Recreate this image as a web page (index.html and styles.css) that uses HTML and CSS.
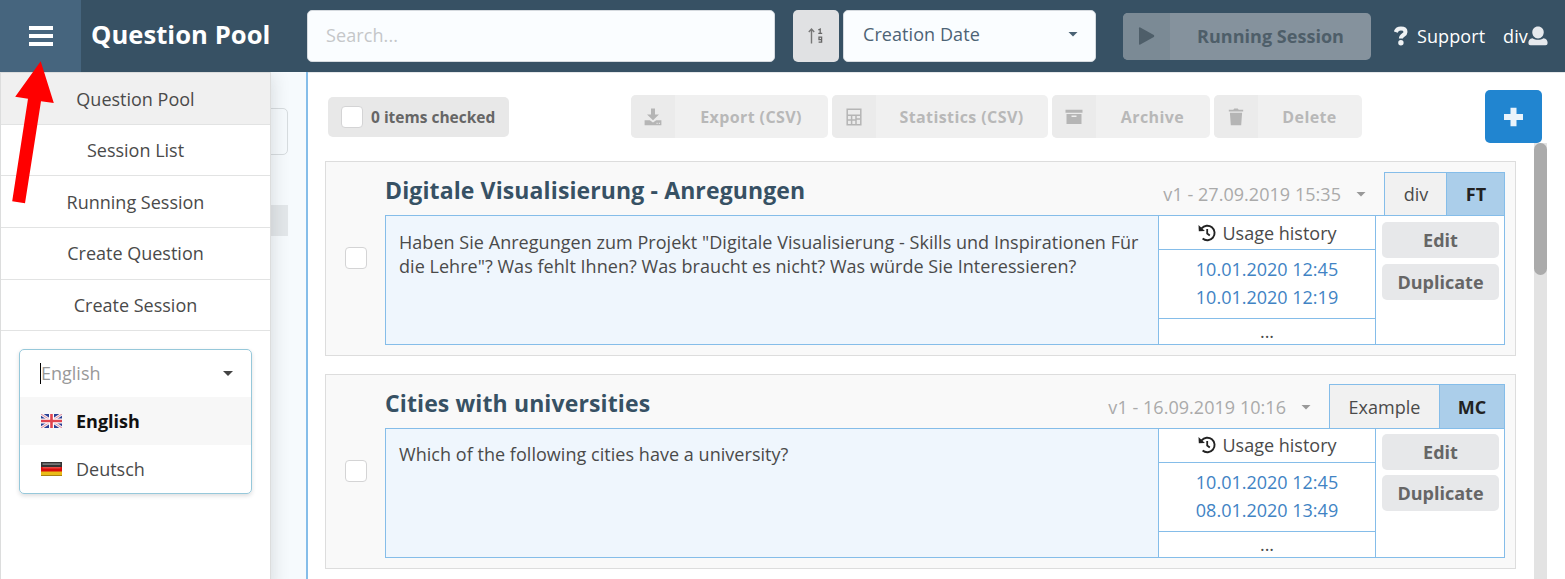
FILE: index.html
```html
<!DOCTYPE html>
<html lang="en">
<head>
<meta charset="utf-8">
<title>Question Pool</title>
<link rel="stylesheet" href="styles.css">
</head>
<body>
<div class="app">
  <header class="topbar">
    <button class="burger" aria-label="Menu"><span></span><span></span><span></span></button>
    <h1 class="page-title"><span>Question Pool</span></h1>
    <div class="search"><span class="t-search">Search...</span></div>
    <button class="sort-dir" aria-label="Sort direction">
      <svg width="16" height="18" viewBox="0 0 16 18"><path d="M3.500 16.500V2.500M.8 5l2.700-3 2.700 3" fill="none" stroke="#777" stroke-width="1.400"/><path d="M10.300 3l1.900-1v4.500M10.300 6.300h3.900" fill="none" stroke="#666" stroke-width="1.300"/><path d="M13.600 12.600h-2.600v-2.500h2.600v5h-3" fill="none" stroke="#666" stroke-width="1.300"/></svg>
    </button>
    <div class="sort-field"><span class="t-sort">Creation Date</span><i class="caret"></i></div>
    <button class="running"><span class="running-icon"><svg width="18" height="20" viewBox="0 0 18 20"><path d="M1 2.200v15.600q0 1.400 1.300.8l13.500-7.700q1.200-.9 0-1.800L2.300 1.400Q1 .8 1 2.200z" fill="#4e5e69"/></svg></span><span class="running-label"><span class="t-running">Running Session</span></span></button>
    <a class="support"><svg width="14" height="20" viewBox="0 0 14 20"><path d="M1.800 6C2.700 3.400 4.400 2.600 6.900 2.600c2.800 0 4.600 1.300 4.600 3.400 0 3.300-4.600 2.800-4.600 6.600" fill="none" stroke="#eff2f4" stroke-width="4"/><circle cx="6.900" cy="16.800" r="2.700" fill="#eff2f4"/></svg><span class="t-support">Support</span></a>
    <a class="user"><span class="t-user">div</span><svg width="20" height="20" viewBox="0 0 20 20"><path d="M10 .5c3.500 0 5.700 2.500 5.700 5.800S13.500 12.500 10 12.500 4.300 9.600 4.300 6.300 6.500.5 10 .5z" fill="#e6e9ed"/><path d="M4.500 12.200c3.300 2.100 7.700 2.100 11 0 2.800.4 4.100 2.100 4.100 4.600 0 1.700-.7 2.500-2.100 2.500H2.500C1.100 19.300.4 18.500.4 16.800c0-2.500 1.300-4.200 4.100-4.600z" fill="#e6e9ed"/></svg></a>
  </header>

  <div class="content">
    <aside class="sidebar">
      <div class="side-input"></div>
      <div class="side-tag"></div>
    </aside>

    <main class="main">
      <div class="toolbar">
        <div class="checked"><i class="box"></i><span class="t-checked">0 items checked</span></div>
        <div class="actions">
          <button class="action export"><span class="ico"><svg width="18" height="18" viewBox="0 0 18 18"><path d="M7 .5h4v6h4L9 12.300 3 6.500h4z" fill="#b5b5b5"/><path d="M.6 12.200h5.200L9 14.500l3.200-2.300h5.200v5H.6z" fill="#b5b5b5"/><path d="M12.500 15.300h1.200M14.800 15.300h1.200" stroke="#eee"/></svg></span><span class="lbl"><span>Export (CSV)</span></span></button>
          <button class="action stats"><span class="ico"><svg width="16" height="18" viewBox="0 0 16 18"><path d="M1.200 1.200h13.600v15.600H1.200zM1.200 7.300h13.600M1.200 12h8.500M5.600 7.300v9.500M10 7.300v9.500M10 11h4" fill="none" stroke="#b5b5b5" stroke-width="1.500"/></svg></span><span class="lbl"><span>Statistics (CSV)</span></span></button>
          <button class="action archive"><span class="ico"><svg width="18" height="16" viewBox="0 0 18 16"><path d="M.5.800h17v3H.5zM1.500 4.900h15V15h-15z" fill="#b5b5b5"/><path d="M6.500 7.200h5" stroke="#eee" stroke-width="1.400"/></svg></span><span class="lbl"><span>Archive</span></span></button>
          <button class="action delete"><span class="ico"><svg width="16" height="18" viewBox="0 0 16 18"><path d="M.8 1.700h4.500l1-1.100h3.400l1 1.100h4.500v1.900H.8zM1.900 4.700h12.200l-.9 12.600H2.800z" fill="#b5b5b5"/></svg></span><span class="lbl"><span>Delete</span></span></button>
        </div>
        <button class="add" aria-label="Add"><svg width="20" height="20" viewBox="0 0 20 20"><path d="M9.500.7v18.600M0 10h19" stroke="#e9f3fb" stroke-width="6"/></svg></button>
      </div>

      <div class="list">
        <div class="cards">
          <article class="card first">
            <div class="pick"><i class="box"></i></div>
            <div class="card-main">
              <div class="card-head">
                <h2><span class="title-a">Digitale Visualisierung - Anregungen</span></h2>
                <div class="version"><span>v1 - 27.09.2019 15:35</span><i class="caret small"></i></div>
                <div class="tag tag-div"><span>div</span></div><div class="type type-ft"><span>FT</span></div>
              </div>
              <div class="card-body">
                <p class="question"><span class="q1">Haben Sie Anregungen zum Projekt "Digitale Visualisierung - Skills und Inspirationen Für</span><br><span class="q2">die Lehre"? Was fehlt Ihnen? Was braucht es nicht? Was würde Sie Interessieren?</span></p>
                <div class="history">
                  <div class="history-head"><svg width="18" height="18" viewBox="0 0 18 18"><path d="M3.600 4.400A7.300 7.300 0 1 1 4.600 14.600" fill="none" stroke="#222" stroke-width="1.900"/><path d="M.5 1l.3 6.300 6.100-.4z" fill="#222"/><path d="M9.200 5v4.600l2.600 1.900" fill="none" stroke="#222" stroke-width="1.800"/></svg><span>Usage history</span></div>
                  <div class="history-dates"><a>10.01.2020 12:45</a><a>10.01.2020 12:19</a></div>
                  <div class="history-more">...</div>
                </div>
                <div class="buttons"><button><span class="t-edit">Edit</span></button><button><span class="t-dup">Duplicate</span></button></div>
              </div>
            </div>
          </article>
          <article class="card second">
            <div class="pick"><i class="box"></i></div>
            <div class="card-main">
              <div class="card-head">
                <h2><span class="title-b">Cities with universities</span></h2>
                <div class="version"><span>v1 - 16.09.2019 10:16</span><i class="caret small"></i></div>
                <div class="tag tag-ex"><span>Example</span></div><div class="type type-mc"><span>MC</span></div>
              </div>
              <div class="card-body">
                <p class="question"><span class="q3">Which of the following cities have a university?</span></p>
                <div class="history">
                  <div class="history-head"><svg width="18" height="18" viewBox="0 0 18 18"><path d="M3.600 4.400A7.300 7.300 0 1 1 4.600 14.600" fill="none" stroke="#222" stroke-width="1.900"/><path d="M.5 1l.3 6.300 6.100-.4z" fill="#222"/><path d="M9.200 5v4.600l2.600 1.900" fill="none" stroke="#222" stroke-width="1.800"/></svg><span>Usage history</span></div>
                  <div class="history-dates"><a>10.01.2020 12:45</a><a>08.01.2020 13:49</a></div>
                  <div class="history-more">...</div>
                </div>
                <div class="buttons"><button><span class="t-edit">Edit</span></button><button><span class="t-dup">Duplicate</span></button></div>
              </div>
            </div>
          </article>
        </div>
        <div class="scroll"><div class="thumb"></div></div>
      </div>
    </main>
  </div>

  <nav class="menu">
    <a class="active"><span>Question Pool</span></a>
    <a><span>Session List</span></a>
    <a><span>Running Session</span></a>
    <a><span>Create Question</span></a>
    <a><span>Create Session</span></a>
    <div class="lang">
      <div class="lang-current"><i class="cursor"></i><span>English</span><i class="caret dark"></i></div>
      <div class="lang-item selected"><svg width="21" height="14" viewBox="0 0 21 14"><path d="M0 0h21v14H0z" fill="#2b3f94"/><path d="M0 0l21 14M21 0L0 14" stroke="#f3eef4" stroke-width="3"/><path d="M0 0l21 14M21 0L0 14" stroke="#e08a98" stroke-width="1"/><path d="M10.500 0v14M0 7h21" stroke="#fff" stroke-width="5"/><path d="M10.500 0v14M0 7h21" stroke="#e0444f" stroke-width="2.600"/></svg><span>English</span></div>
      <div class="lang-item"><svg width="21" height="14" viewBox="0 0 21 14"><path d="M0 0h21v5H0z" fill="#333"/><path d="M1.500 1.200h18V3h-18z" fill="#777"/><path d="M0 5h21v5H0z" fill="#d80c0c"/><path d="M1.500 5h18v1.500h-18z" fill="#e84a44"/><path d="M0 9.500h21V14H0z" fill="#e9bc18"/><path d="M0 13h21v1H0z" fill="#a98312"/></svg><span>Deutsch</span></div>
    </div>
  </nav>

  <svg class="pointer" width="44" height="144" viewBox="11 61 44 144"><path d="M40.700 61.300L53.800 103 41 101.200 25 203.200 12.200 201.300 28 98.800 15.200 96.800z" fill="#f00"/></svg>
</div>
</body>
</html>
```

FILE: styles.css
```css
* { box-sizing: border-box; }
body { margin: 0; font-family: "Open Sans", "Noto Sans", sans-serif; font-size: 18px; color: #4a4a4a; background: #fff; }
button { border: 0; margin: 0; padding: 0; font: inherit; }
h1, h2, p { margin: 0; }
span { white-space: nowrap; }
svg { display: block; flex: none; }
.app { position: relative; width: 1565px; height: 579px; overflow: hidden; display: flex; flex-direction: column; }

.topbar { height: 72px; flex: none; background: #375164; display: flex; align-items: center; }
.burger { width: 81px; height: 72px; flex: none; background: #46657e; display: flex; flex-direction: column; align-items: center; justify-content: center; gap: 4px; padding-bottom: 1px; }
.burger span { width: 24px; height: 4px; background: #fff; }
.page-title { width: 226px; flex: none; padding: 0 0 2px 10px; font-size: 25.600px; line-height: 36px; font-weight: 700; letter-spacing: .04px; color: #fff; }
.search { width: 468px; height: 52px; flex: none; border: 1px solid #d5dadf; border-radius: 5px; background: #fafdff; display: flex; align-items: center; padding: 0 0 2px 18px; color: #c5c7c9; margin-right: 18px; }
.t-search { letter-spacing: .1px; }
.sort-dir { width: 46px; height: 52px; flex: none; border-radius: 5px; background: #e0e1e3; display: flex; align-items: center; justify-content: center; margin-right: 4px; }
.sort-field { width: 253px; height: 52px; flex: none; border: 1px solid #d5dadf; border-radius: 5px; background: #fafdff; display: flex; align-items: center; justify-content: space-between; padding: 0 17px 4px 19px; color: #4d6375; margin-right: 27px; }
.t-sort { letter-spacing: .07px; }
.caret { display: block; width: 10px; height: 5px; flex: none; background: #4a6274; clip-path: polygon(0 0, 100% 0, 50% 100%); }
.caret.small { background: #999; }
.caret.dark { background: #444; }
.running { width: 248px; height: 47px; flex: none; border-radius: 5px; overflow: hidden; background: #85929d; display: flex; color: #4e5e69; font-weight: 700; }
.running-icon { width: 47px; background: #7b8a95; display: flex; align-items: center; justify-content: center; }
.running-label { flex: 1; display: flex; align-items: center; justify-content: center; letter-spacing: .03px; padding-bottom: 1px; }
.support { display: flex; align-items: center; gap: 9px; margin-left: 23px; width: 109px; color: #fff; }
.t-support { letter-spacing: .1px; padding-bottom: 1px; }
.t-user { padding-bottom: 1px; letter-spacing: .15px; }
.user { display: flex; align-items: center; color: #fff; }

.content { flex: 1; display: flex; min-height: 0; }
.sidebar { width: 308px; flex: none; background: #f6fafd; border-right: 2px solid #85bde9; padding: 36px 18px 0 20px; }
.side-input { height: 47px; border: 1px solid #d7dcdf; border-radius: 5px; }
.side-tag { height: 31px; margin-top: 50px; background: #e3e7ea; }
.main { flex: 1; display: flex; flex-direction: column; min-width: 0; border-top: 1px solid #e6e8ea; }

.toolbar { height: 70px; flex: none; display: flex; align-items: center; padding: 17px 23px 0 20px; }
.checked { width: 181px; height: 40px; border-radius: 5px; background: #e8e8e8; display: flex; align-items: center; padding-left: 13px; gap: 8px; font-size: 15.500px; font-weight: 700; color: #666; margin-right: 122px; }
.box { display: block; width: 22px; height: 22px; flex: none; border: 1px solid #d4d4d5; border-radius: 4px; background: #fff; }
.actions { display: flex; gap: 4px; }
.action { height: 43px; border-radius: 5px; overflow: hidden; background: #f0f0f0; color: #b8b8b8; font-size: 16px; font-weight: 700; letter-spacing: .4px; display: flex; }
.ico { width: 44px; background: #ebebeb; display: flex; align-items: center; justify-content: center; padding-right: 1px; }
.lbl { flex: 1; display: flex; align-items: center; justify-content: center; padding-right: 1px; }
.export { width: 197px; }
.stats { width: 216px; }
.archive { width: 158px; }
.delete { width: 148px; }
.add { width: 57px; height: 53px; margin-left: auto; border-radius: 5px; background: #2185d0; display: flex; align-items: center; justify-content: center; }

.list { flex: 1; min-height: 0; display: flex; justify-content: space-between; padding: 0 18px 0 17px; }
.cards { width: 1191px; padding-top: 18px; display: flex; flex-direction: column; gap: 18px; }
.scroll { width: 13px; background: #e3e3e3; }
.thumb { height: 132px; border-radius: 7px; background: #ababab; }
.card { height: 195px; flex: none; border: 1px solid #ddd; background: #f9f9f9; display: flex; padding: 9px 10px 10px 0; }
.pick { width: 59px; display: flex; align-items: center; justify-content: center; }
.card-main { flex: 1; display: flex; flex-direction: column; }
.card-head { height: 44px; display: flex; }
.card-head h2 { flex: 1; font-size: 23px; line-height: 38px; font-weight: 700; letter-spacing: .12px; color: #375164; }
.version { display: flex; align-items: center; gap: 15px; color: #aaa; letter-spacing: .04px; padding-top: 2px; margin-right: 18px; }
.tag, .type { border: 1px solid #85bde9; border-bottom: 0; display: flex; align-items: center; justify-content: center; }
.tag { background: #f1f1f1; border-right: 0; padding-left: 1px; }
.type { background: #abceea; color: #222; font-weight: 700; }
.first .tag, .first .type { margin-top: 1px; }
.tag-div { width: 62px; }
.type-ft { width: 59px; padding-left: 1px; }
.tag-ex { width: 110px; padding-left: 0; }
.type-mc { width: 66px; }
.card-body { flex: 1; border: 1px solid #85bde9; display: flex; background: #fff; }
.question { flex: 1; background: #eff6fd; padding: 14px 0 0 13px; line-height: 24.200px; letter-spacing: .04px; }
.second .question { padding-top: 13px; }
.history { width: 218px; border: solid #85bde9; border-width: 0 1px; display: flex; flex-direction: column; text-align: center; }
.history-head { height: 34px; border-bottom: 1px solid #85bde9; display: flex; align-items: center; justify-content: center; gap: 6px; padding: 0 0 0 1px; }
.second .history-head { height: 34px; padding-bottom: 1px; }
.history-dates { height: 69px; border-bottom: 1px solid #85bde9; display: flex; flex-direction: column; justify-content: center; color: #4183c4; line-height: 28px; padding-bottom: 3px; }
.history-more { flex: 1; line-height: 25px; }
.buttons { width: 128px; padding: 6px 5px 5px 6px; display: flex; flex-direction: column; gap: 6px; }
.second .buttons { padding-top: 5px; gap: 5px; }
.buttons button { height: 36px; border-radius: 5px; background: #e7e8ea; color: #666; font-weight: 700; display: flex; align-items: center; justify-content: center; }

.menu { position: absolute; left: 0; top: 72px; width: 271px; height: 520px; background: #fff; border: 1px solid #dcdddd; box-shadow: 0 2px 18px rgba(34, 36, 38, .16); clip-path: inset(0 -30px 0 0); display: flex; flex-direction: column; }
.menu > a { height: 51.700px; flex: none; border-bottom: 1px solid #e2e3e3; display: flex; align-items: center; justify-content: center; }
.menu > a.active { background: #f0f0f0; padding-top: 1px; }
.lang { margin: 18px 18px 0; height: 145px; border: 1px solid #96c8da; border-radius: 5px; box-shadow: 0 2px 4px rgba(34, 36, 38, .15); overflow: hidden; flex: none; }
.lang-current { height: 47px; display: flex; align-items: center; padding: 0 18px 1px 20px; color: #999; }
.lang-current .caret { margin-left: auto; }
.cursor { width: 1px; height: 21px; background: #000; }
.lang-item { height: 48px; display: flex; align-items: center; gap: 14px; padding-left: 21px; }
.lang-item.selected { background: #f7f7f7; color: #111; font-weight: 700; }
.pointer { position: absolute; left: 11px; top: 61px; }
```
